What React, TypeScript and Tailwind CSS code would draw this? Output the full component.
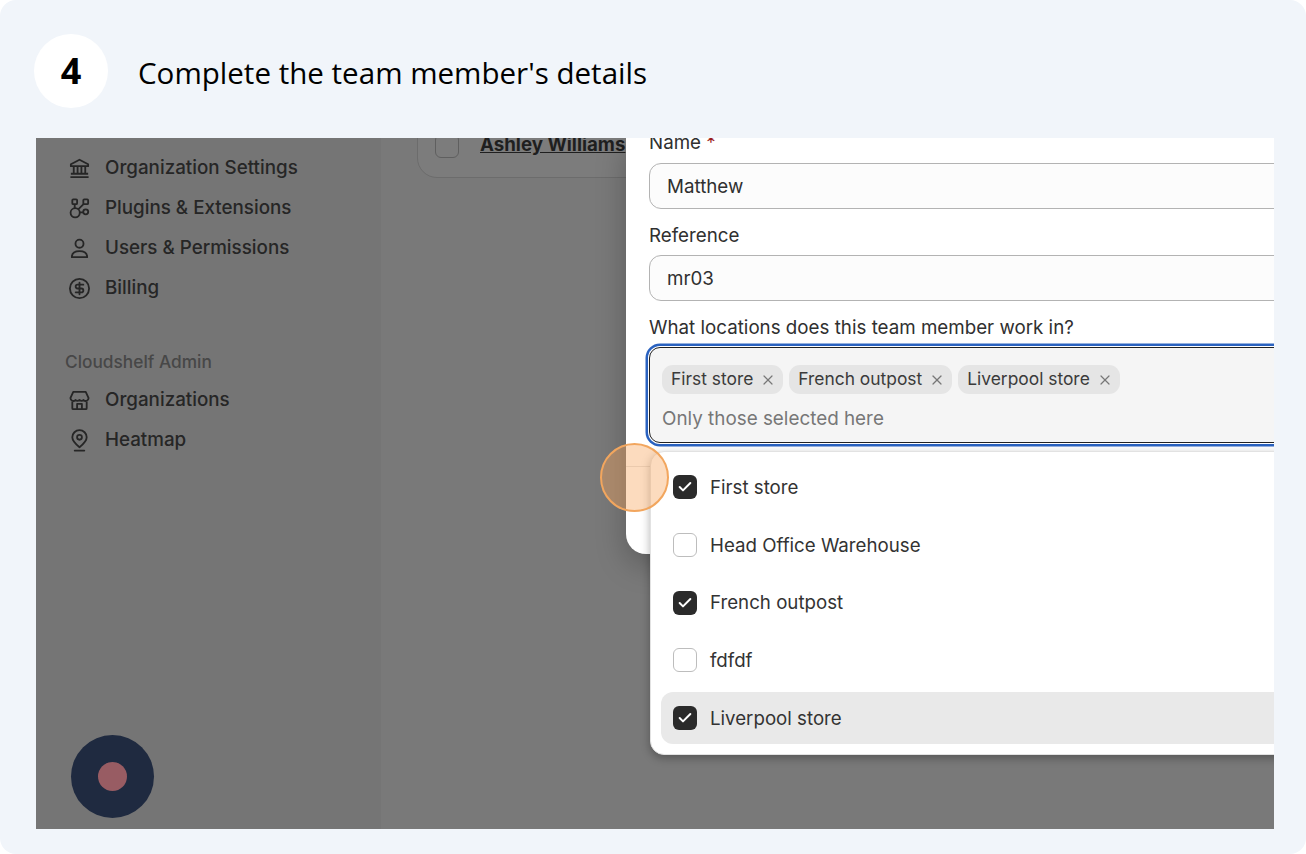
import { Check, CircleDollarSign, X } from 'lucide-react';
import type { ReactNode } from 'react';

const icon = 'w-[23px] h-[23px] shrink-0';

function BankIcon() {
  return (
    <svg viewBox="0 0 24 24" fill="none" stroke="currentColor" strokeWidth="1.9" strokeLinejoin="round" className={icon}>
      <path d="M12 2.8 3 7.6v2h18v-2z" />
      <path d="M6 10v7M10 10v7M14 10v7M18 10v7M3 17.500h18M2.500 21h19" />
    </svg>
  );
}

function PluginIcon() {
  return (
    <svg viewBox="0 0 24 24" fill="none" stroke="currentColor" strokeWidth="1.9" className={icon}>
      <rect x="4.500" y="2.500" width="5" height="5" rx="1" />
      <rect x="16" y="2.500" width="5" height="5" rx="1" />
      <circle cx="7.500" cy="16.500" r="4.800" />
      <circle cx="18.500" cy="15.500" r="2.600" />
      <path d="M7 7.500v4.200M16.200 7.500l-5.500 5.500M12.300 16h3.600" />
    </svg>
  );
}

function UserIcon() {
  return (
    <svg viewBox="0 0 24 24" fill="none" stroke="currentColor" strokeWidth="1.9" strokeLinejoin="round" className={icon}>
      <circle cx="12" cy="7" r="4.200" />
      <path d="M4 21c0-4.200 3.400-6.200 8-6.200s8 2 8 6.200z" />
    </svg>
  );
}

function ShopIcon() {
  return (
    <svg viewBox="0 0 24 24" fill="none" stroke="currentColor" strokeWidth="1.9" strokeLinejoin="round" className={icon}>
      <path d="M5.500 3h13l3 6.500a3 3 0 0 1-5.200 2 3.300 3.300 0 0 1-4.300 0 3.300 3.300 0 0 1-4.300 0 3 3 0 0 1-5.200-2z" />
      <path d="M4.500 13v7a1 1 0 0 0 1 1h13a1 1 0 0 0 1-1v-7M9.500 21v-5.500h5V21" />
    </svg>
  );
}

function PinIcon() {
  return (
    <svg viewBox="0 0 24 24" fill="none" stroke="currentColor" strokeWidth="1.9" strokeLinecap="round" className={icon}>
      <path d="M12 19c-4.600-3.600-7.500-6.800-7.500-10.300a7.500 7.500 0 0 1 15 0c0 3.500-2.900 6.700-7.500 10.300z" />
      <circle cx="12" cy="8.700" r="2.500" />
      <path d="M7 22.500h10" />
    </svg>
  );
}

function NavRow({ glyph, label }: { glyph: ReactNode; label: string }) {
  return (
    <div className="flex items-center gap-[14px] h-10 pl-[32px] text-[18.8px] font-medium text-[#262626]">
      {glyph}
      <span>{label}</span>
    </div>
  );
}

function TextField({ label, value, required }: { label: string; value: string; required?: boolean }) {
  return (
    <div className="mb-[13px]">
      <div className={`h-[26px] mb-[7px] text-[18.75px] text-[#303030] ${required ? 'leading-[26px]' : 'leading-[28px]'}`}>
        {label} {required && <span className="text-[#9b1c1c]">*</span>}
      </div>
      <div className="h-[46px] flex items-center pl-[17px] pt-[2px] text-[18.75px] text-[#303030] bg-[#fcfcfc] border border-[#b3b3b3] rounded-l-[12px]">
        {value}
      </div>
    </div>
  );
}

function Chip({ label }: { label: string }) {
  return (
    <div className="h-[29px] flex items-center gap-[7px] pl-[9px] pr-[7px] rounded-[11px] bg-[#e5e5e5] text-[17.4px] text-[#3b3b3b]">
      <span>{label}</span>
      <X size={16} strokeWidth={1.8} className="text-[#777777]" />
    </div>
  );
}

function MenuRow({ label, checked, active }: { label: string; checked?: boolean; active?: boolean }) {
  return (
    <div className={`h-[52px] flex items-center gap-[13px] px-[12px] rounded-l-[12px] text-[18.7px] text-[#333333] ${active ? 'bg-[#e9e9e9]' : ''}`}>
      {checked ? (
        <div className="w-6 h-6 rounded-[6px] bg-[#2b2b2b] flex items-center justify-center">
          <Check size={16} strokeWidth={3} className="text-white" />
        </div>
      ) : (
        <div className="w-6 h-6 rounded-[6px] bg-white border-[1.5px] border-[#bdbdbd]" />
      )}
      <span className="mt-[2px]">{label}</span>
    </div>
  );
}

export default function App() {
  return (
    <div className="w-[1306px] h-[854px] bg-white overflow-hidden" style={{ fontFamily: 'Inter, sans-serif' }}>
      <div className="h-full rounded-[16px] bg-[#f1f5fa] pl-9 pr-8 pt-[34px]">
        <div className="flex items-center h-[74px] mb-[30px] -ml-[2px]">
          <div className="w-[74px] h-[74px] rounded-full bg-white flex items-center justify-center text-black text-[36px] font-bold" style={{ fontFamily: '"Open Sans", sans-serif' }}>
            4
          </div>
          <h1 className="ml-[30px] mt-[5px] text-[29.55px] text-black" style={{ fontFamily: '"Open Sans", sans-serif' }}>
            Complete the team member's details
          </h1>
        </div>

        <div className="relative flex h-[691px] overflow-hidden bg-[#797979]">
          <aside className="w-[345px] shrink-0 bg-[#757575]">
            <div className="-mt-[30px]">
              <NavRow glyph={<UserIcon />} label="" />
              <NavRow glyph={<BankIcon />} label="Organization Settings" />
              <NavRow glyph={<PluginIcon />} label="Plugins & Extensions" />
              <NavRow glyph={<UserIcon />} label="Users & Permissions" />
              <NavRow glyph={<CircleDollarSign className={icon} strokeWidth={1.9} />} label="Billing" />
            </div>
            <div className="h-6 leading-6 mt-[42px] mb-[6px] pl-[29px] text-[17.3px] font-medium text-[#474747]">Cloudshelf Admin</div>
            <NavRow glyph={<ShopIcon />} label="Organizations" />
            <NavRow glyph={<PinIcon />} label="Heatmap" />
          </aside>

          <main className="flex-1 pl-9">
            <div className="-mt-[30px] h-[70px] w-[900px] flex items-end pb-[20px] pl-[17px] gap-[21px] rounded-[20px] border border-[#6c6c6c] bg-[#7c7c7c]">
              <div className="w-6 h-6 -mb-[1px] rounded-[6px] border-[1.5px] border-[#5f5f5f]" />
              <span className="text-[18.7px] leading-[24px] font-bold text-[#1f1f1f] underline">Ashley Williams</span>
            </div>
          </main>

          {/* dialog */}
          <div className="absolute left-[590px] top-0 w-[800px] h-[416px] bg-white rounded-bl-[20px] pl-[23px] shadow-[0_10px_30px_rgba(0,0,0,0.25)]">
            <div className="-mt-[8px]">
              <TextField label="Name" value="Matthew" required />
              <TextField label="Reference" value="mr03" />
              <div className="h-[26px] leading-[28px] mb-[7px] text-[18.75px] text-[#303030]">What locations does this team member work in?</div>
              <div className="h-[96px] pl-[12px] pt-[17px] bg-[#f5f5f5] border border-[#222222] rounded-l-[11px] shadow-[0_0_0_1px_#ffffff,0_0_0_3.5px_#2a62c0]">
                <div className="flex gap-[6px]">
                  <Chip label="First store" />
                  <Chip label="French outpost" />
                  <Chip label="Liverpool store" />
                </div>
                <div className="mt-[13px] text-[18.85px] leading-[24px] text-[#777777]">Only those selected here</div>
              </div>
            </div>
            <div className="absolute left-0 right-0 top-[328px] border-t border-[#e3e3e3]" />
          </div>

          {/* location dropdown */}
          <div className="absolute left-[614px] top-[313px] w-[800px] h-[304px] flex flex-col gap-[5.75px] pt-[9px] pl-[10px] bg-white border border-[#e2e2e2] rounded-l-[14px] shadow-[0_3px_10px_rgba(0,0,0,0.3)]">
            <MenuRow label="First store" checked />
            <MenuRow label="Head Office Warehouse" />
            <MenuRow label="French outpost" checked />
            <MenuRow label="fdfdf" />
            <MenuRow label="Liverpool store" checked active />
          </div>

          {/* step hotspot */}
          <div className="absolute left-[564px] top-[305px] w-[69px] h-[69px] rounded-full border-2 border-[#f2a65e] bg-[#f7a45c]/40" />

          {/* recorder button */}
          <div className="absolute left-[35px] top-[597px] w-[83px] h-[83px] rounded-full bg-[#1f2a40] flex items-center justify-center">
            <div className="w-[29px] h-[29px] rounded-full bg-[#985c63]" />
          </div>
        </div>
      </div>
    </div>
  );
}
